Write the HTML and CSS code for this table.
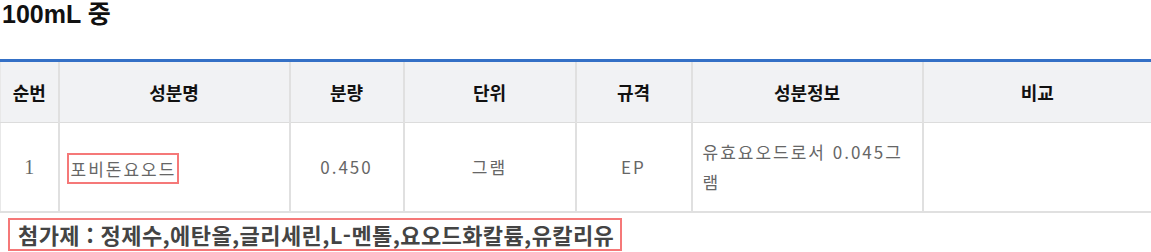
FILE: index.html
```html
<!DOCTYPE html>
<html lang="ko">
<head>
<meta charset="utf-8">
<link rel="stylesheet" href="styles.css">
</head>
<body>
<h2 class="title">100mL 중</h2>
<table class="ingredients">
  <colgroup>
    <col class="c-no">
    <col class="c-name">
    <col class="c-amount">
    <col class="c-unit">
    <col class="c-spec">
    <col class="c-info">
    <col class="c-note">
  </colgroup>
  <thead>
    <tr>
      <th>순번</th>
      <th>성분명</th>
      <th>분량</th>
      <th>단위</th>
      <th>규격</th>
      <th>성분정보</th>
      <th>비교</th>
    </tr>
  </thead>
  <tbody>
    <tr>
      <td class="center num">1</td>
      <td class="left"><span class="mark">포비돈요오드</span></td>
      <td class="center">0.450</td>
      <td class="center">그램</td>
      <td class="center">EP</td>
      <td class="left">유효요오드로서 0.045그램</td>
      <td></td>
    </tr>
  </tbody>
</table>
<div class="additives">첨가제 : 정제수,에탄올,글리세린,L-멘톨,요오드화칼륨,유칼리유</div>
</body>
</html>
```
FILE: styles.css
```css
html, body {
  margin: 0;
  padding: 0;
  background: #ffffff;
}
body {
  font-family: "Noto Sans CJK KR", "Noto Sans", sans-serif;
  color: #222;
}
.title {
  margin: 0;
  padding: 0 0 0 2px;
  height: 59px;
  font-family: "Liberation Sans", "Noto Sans CJK KR", sans-serif;
  font-size: 25px;
  line-height: 28px;
  font-weight: 700;
  color: #111;
}
.ingredients {
  width: 1151px;
  table-layout: fixed;
  border-collapse: collapse;
  border-top: 3px solid #3470c6;
}
.c-no { width: 58px; }
.c-name { width: 231px; }
.c-amount { width: 114px; }
.c-unit { width: 172px; }
.c-spec { width: 116px; }
.c-info { width: 231px; }
.c-note { width: auto; }
.ingredients th {
  height: 60px;
  padding: 0;
  background: #f1f2f4;
  font-size: 18px;
  font-weight: 700;
  color: #111;
  border-left: 2px solid #e0e0e0;
  border-bottom: 1px solid #dcdcdc;
}
.ingredients th:first-child,
.ingredients td:first-child {
  border-left: 1px solid #e8e8e8;
}
.ingredients td {
  height: 88px;
  padding: 0 10px;
  font-size: 17px;
  line-height: 30px;
  letter-spacing: 2px;
  color: #666;
  border-left: 2px solid #e0e0e0;
  border-bottom: 2px solid #e0e0e0;
  vertical-align: middle;
}
.center { text-align: center; }
.left { text-align: left; }
.ingredients td.num {
  font-family: "Liberation Serif", serif;
  font-size: 20px;
  letter-spacing: 0;
}
.mark {
  display: inline-block;
  margin: 2px 0 0 -3px;
  padding: 0 1px 0 2px;
  line-height: 27px;
  border: 2px solid #f57878;
}
.additives {
  display: inline-block;
  margin: 5px 0 0 8px;
  padding: 0 6px 0 8px;
  height: 29px;
  line-height: 29px;
  font-size: 22px;
  letter-spacing: 0.4px;
  font-weight: 700;
  color: #444;
  border: 2px solid #f57878;
}
```
